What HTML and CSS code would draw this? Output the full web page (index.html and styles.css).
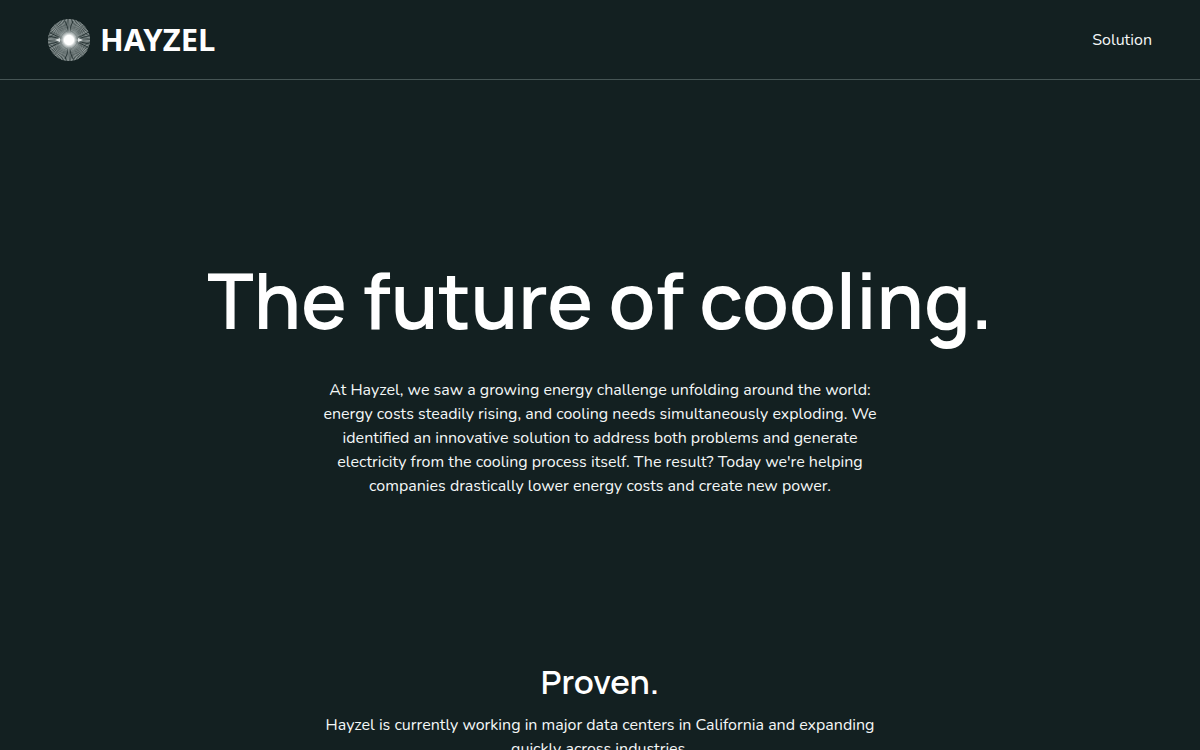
FILE: index.html
```html
<!DOCTYPE html>
<html lang="en">
<head>
  <meta charset="UTF-8">
  <meta name="viewport" content="width=device-width, initial-scale=1">
  <title>Hayzel</title>
  <link rel="stylesheet" href="styles.css">
</head>
<body>
  <header class="site-header">
    <a class="logo" href="#">
      <svg class="logo-mark" viewBox="0 0 42 42" aria-hidden="true">
        <defs>
          <radialGradient id="glow">
            <stop offset="0" stop-color="#fff"/>
            <stop offset="0.36" stop-color="#fff"/>
            <stop offset="0.55" stop-color="#c5cccc" stop-opacity="0.75"/>
            <stop offset="1" stop-color="#7b8787" stop-opacity="0"/>
          </radialGradient>
        </defs>
        <circle cx="21" cy="21" r="21" fill="#2b3838"/>
        <circle cx="21" cy="21" r="10.5" fill="none" stroke="#aab3b3" stroke-width="21" pathLength="176" stroke-dasharray="1 1"/>
        <!-- dark lobes around the core -->
        <g fill="none" stroke="#132021" stroke-width="0.9" opacity="0.8">
          <path d="M15 19Q9 18 1 13M15 20Q9 19 1 17M15 23Q9 24 1 29M15 22Q9 23 1 25"/>
          <path d="M27 19Q33 18 41 13M27 20Q33 19 41 17M27 23Q33 24 41 29M27 22Q33 23 41 25"/>
          <path d="M20 14Q20 7 17 2M22 14Q22 7 25 2M20 28Q20 35 17 40M22 28Q22 35 25 40"/>
          <path d="M13 18Q15 14 19 12M29 18Q27 14 23 12M13 24Q15 28 19 30M29 24Q27 28 23 30"/>
        </g>
        <circle cx="21" cy="21" r="13" fill="url(#glow)"/>
        <path d="M7 21l5-2v4zM35 21l-5-2v4z" fill="#e0e5e5"/>
      </svg>
      <span class="logo-name">HAYZEL</span>
    </a>
    <nav>
      <a class="nav-link" href="#solution">Solution</a>
    </nav>
  </header>

  <main>
    <section class="hero">
      <h1>The future of cooling.</h1>
      <p>At Hayzel, we saw a growing energy challenge unfolding around the world: energy costs steadily rising, and cooling needs simultaneously exploding. We identified an innovative solution to address both problems and generate electricity from the cooling process itself. The result? Today we're helping companies drastically lower energy costs and create new power.</p>
    </section>

    <section class="feature" id="solution">
      <h2>Proven.</h2>
      <p>Hayzel is currently working in major data centers in California and expanding quickly across industries.</p>
    </section>
  </main>
</body>
</html>
```
FILE: styles.css
```css
* {
  box-sizing: border-box;
}

body {
  margin: 0;
  font-family: Nunito, Lato, sans-serif;
  font-size: 16px;
  line-height: 24px;
  background-color: #132021;
  color: #f4f7f7;
}

h1,
h2,
p {
  margin: 0;
}

.site-header {
  display: flex;
  align-items: center;
  justify-content: space-between;
  height: 80px;
  padding: 0 48px;
  border-bottom: 1px solid #465555;
}

.logo {
  display: flex;
  align-items: center;
  gap: 10px;
  color: #fff;
  text-decoration: none;
}

.logo-mark {
  width: 42px;
  height: 42px;
}

.logo-name {
  padding-bottom: 2px;
  font-family: "Noto Sans", sans-serif;
  font-size: 31px;
  font-weight: 700;
  line-height: 40px;
}

.nav-link {
  color: inherit;
  text-decoration: none;
}

.nav-link:hover {
  text-decoration: underline;
}

.hero,
.feature {
  display: flex;
  flex-direction: column;
  align-items: center;
  padding: 0 24px;
  text-align: center;
}

.hero {
  gap: 30px;
  padding-top: 172px;
  padding-bottom: 160px;
}

.feature {
  gap: 8px;
  padding-bottom: 160px;
}

h1,
h2 {
  font-family: Manrope, Inter, sans-serif;
  font-weight: 600;
  color: #fff;
}

h1 {
  font-size: 77px;
  line-height: 96px;
}

h2 {
  font-size: 33px;
  line-height: 47px;
}

.hero p,
.feature p {
  max-width: 560px;
}
```
